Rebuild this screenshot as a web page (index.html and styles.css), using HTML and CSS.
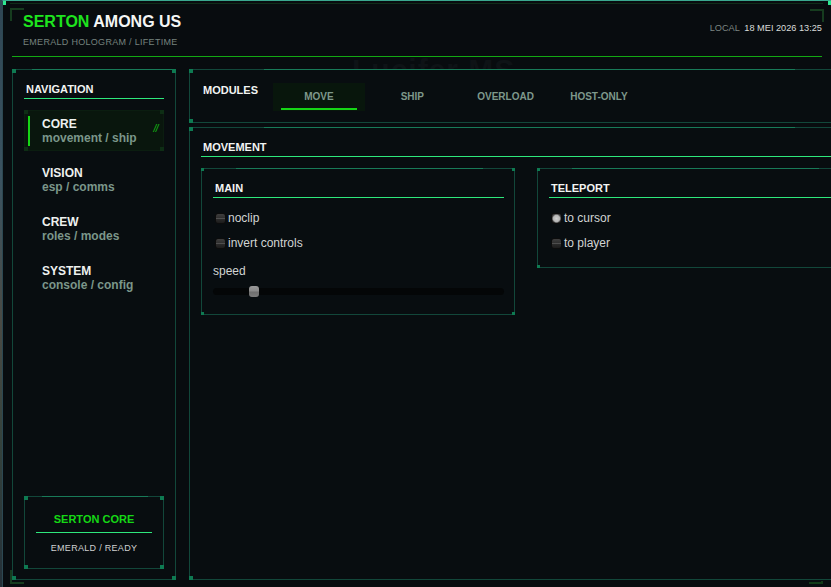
FILE: index.html
```html
<!DOCTYPE html>
<html lang="nl">
<head>
<meta charset="utf-8">
<title>Serton Among Us</title>
<link rel="stylesheet" href="styles.css">
</head>
<body>
<div class="window">
  <div class="bg-text">Lucifer MS</div>
  <span class="frame-corner fc-tl"></span>
  <span class="frame-corner fc-tr"></span>
  <span class="frame-corner fc-bl"></span>
  <span class="frame-corner fc-br"></span>
  <span class="win-dot dot-l"></span>
  <span class="win-dot dot-r"></span>

  <header class="header">
    <div class="head-row">
      <div class="brand">
        <div class="title"><span class="accent">SERTON</span> AMONG US</div>
        <div class="subtitle">EMERALD HOLOGRAM / LIFETIME</div>
      </div>
      <div class="clock"><span class="clock-label">LOCAL</span><span class="clock-time">18 MEI 2026 13:25</span></div>
    </div>
  </header>

  <div class="content">
    <aside class="panel sidebar">
      <div class="sec-title">NAVIGATION</div>
      <nav class="nav">
        <a class="nav-item active">
          <span class="nav-bar"></span>
          <span class="nav-text"><span class="nav-name">CORE</span><span class="nav-sub">movement / ship</span></span>
          <span class="nav-mark">//</span>
        </a>
        <a class="nav-item">
          <span class="nav-text"><span class="nav-name">VISION</span><span class="nav-sub">esp / comms</span></span>
        </a>
        <a class="nav-item">
          <span class="nav-text"><span class="nav-name">CREW</span><span class="nav-sub">roles / modes</span></span>
        </a>
        <a class="nav-item">
          <span class="nav-text"><span class="nav-name">SYSTEM</span><span class="nav-sub">console / config</span></span>
        </a>
      </nav>
      <div class="panel core-box">
        <div class="core-title">SERTON CORE</div>
        <div class="core-line"></div>
        <div class="core-status">EMERALD / READY</div>
      </div>
    </aside>

    <main class="main">
      <section class="panel modules">
        <div class="modules-label">MODULES</div>
        <div class="tabs">
          <div class="tab active">MOVE</div>
          <div class="tab">SHIP</div>
          <div class="tab">OVERLOAD</div>
          <div class="tab">HOST-ONLY</div>
        </div>
      </section>

      <section class="panel movement">
        <div class="sec-title">MOVEMENT</div>
        <div class="cards">
          <div class="panel card">
            <div class="sec-title card-title">MAIN</div>
            <div class="rows">
              <label class="row"><span class="check"></span><span>noclip</span></label>
              <label class="row"><span class="check"></span><span>invert controls</span></label>
            </div>
            <div class="field-label">speed</div>
            <div class="slider">
              <div class="slider-track"></div>
              <div class="slider-thumb" style="left: 12.4%"></div>
            </div>
          </div>
          <div class="panel card">
            <div class="sec-title card-title">TELEPORT</div>
            <div class="rows">
              <label class="row"><span class="check on"></span><span>to cursor</span></label>
              <label class="row"><span class="check"></span><span>to player</span></label>
            </div>
          </div>
        </div>
      </section>
    </main>
  </div>
</div>
</body>
</html>
```

FILE: styles.css
```css
* { box-sizing: border-box; }

html, body {
  margin: 0;
  padding: 0;
  width: 831px;
  height: 587px;
  overflow: hidden;
}

body {
  background: linear-gradient(180deg, #2f4654 0%, #3b5361 30%, #4a4a44 55%, #35423c 75%, #243038 100%);
  font-family: "Liberation Sans", Arial, sans-serif;
  color: #eef1ef;
}

.window {
  position: relative;
  margin-left: 2px;
  width: 829px;
  height: 587px;
  background: #080c0f;
  border-top: 1px solid #3aa88e;
  border-left: 1px solid #2c4852;
  overflow: hidden;
}

.bg-text {
  position: absolute;
  left: 349px;
  top: 52px;
  font-size: 30px;
  font-weight: bold;
  color: #0e1316;
  letter-spacing: 1px;
}

.win-dot {
  position: absolute;
  top: 0;
  width: 4px;
  height: 4px;
  background: #2ee890;
}
.dot-l { left: -1px; }
.dot-r { right: 0; width: 3px; }

.frame-corner {
  position: absolute;
  width: 14px;
  height: 13px;
  border-color: #163c1f;
  border-style: solid;
  border-width: 0;
}
.fc-tl { left: 7px; top: 7px; border-top-width: 2px; border-left-width: 2px; }
.fc-tr { right: 7px; top: 8px; border-top-width: 2px; border-right-width: 2px; }
.fc-bl { left: 7px; bottom: 3px; border-bottom-width: 2px; border-left-width: 2px; height: 14px; }
.fc-br { right: 8px; bottom: 3px; border-bottom-width: 2px; border-right-width: 2px; height: 3px; border-color: #123a18; }

/* header */
.header {
  position: relative;
  margin: 2px 8px 0 7px;
  padding: 0 1px 0 2px;
  border-top: 1px solid #0f2c18;
}

.head-row {
  display: flex;
  justify-content: space-between;
  align-items: flex-start;
  padding: 9px 0 8px 11px;
  border-bottom: 1px solid #13a813;
}

.title {
  font-size: 16px;
  line-height: 18px;
  font-weight: bold;
  color: #f4f6f5;
}
.accent { color: #1ee41e; }

.subtitle {
  margin-top: 6px;
  font-size: 9px;
  line-height: 11px;
  letter-spacing: 0.3px;
  color: #76827e;
}

.clock {
  padding-top: 10px;
  font-size: 9.2px;
  line-height: 11px;
  white-space: nowrap;
}
.clock-label { color: #7c8682; margin-right: 4.5px; }
.clock-time { color: #d9dcda; }

/* layout */
.content {
  display: flex;
  gap: 13px;
  margin: 12px 0 0 9px;
}

.panel {
  position: relative;
  border: 1px solid #12473a;
  background: #080d10;
}
.panel::before {
  content: "";
  position: absolute;
  top: -1px;
  left: 11%;
  right: 10%;
  height: 1px;
  background: #187a58;
}
.panel::after {
  content: "";
  position: absolute;
  inset: -1px;
  pointer-events: none;
  background:
    linear-gradient(#0e7a52, #0e7a52) left top / 4px 4px no-repeat,
    linear-gradient(#0e7a52, #0e7a52) right top / 4px 4px no-repeat,
    linear-gradient(#0e7a52, #0e7a52) left bottom / 4px 4px no-repeat,
    linear-gradient(#0e7a52, #0e7a52) right bottom / 4px 4px no-repeat;
}

.sec-title {
  font-size: 11px;
  line-height: 14px;
  font-weight: bold;
  color: #f2f4f3;
  padding: 0 0 2px 2px;
  border-bottom: 1px solid #2ee87c;
}

/* sidebar */
.sidebar {
  flex: none;
  width: 164px;
  height: 511px;
  padding: 12px 11px 10px 11px;
  display: flex;
  flex-direction: column;
}
.sidebar::before { left: 12%; right: 1%; }

.nav {
  display: flex;
  flex-direction: column;
  gap: 8px;
  margin-top: 11px;
}

.nav-item {
  position: relative;
  display: flex;
  align-items: center;
  height: 41px;
  padding: 6px 5px 5px 17px;
  border: 1px solid transparent;
  text-decoration: none;
}
.nav-item.active {
  background: #09160d;
  border-color: #0b1d10;
}
.nav-item.active::after {
  content: "";
  position: absolute;
  inset: -1px;
  pointer-events: none;
  background:
    linear-gradient(#0e2e15, #0e2e15) left top / 4px 4px no-repeat,
    linear-gradient(#0e2e15, #0e2e15) right top / 4px 4px no-repeat,
    linear-gradient(#0e2e15, #0e2e15) left bottom / 4px 4px no-repeat,
    linear-gradient(#0e2e15, #0e2e15) right bottom / 4px 4px no-repeat;
}

.nav-bar {
  position: absolute;
  left: 3px;
  top: 5px;
  width: 2px;
  height: 30px;
  background: #16d616;
}

.nav-text {
  flex: 1;
  display: flex;
  flex-direction: column;
  align-self: flex-start;
}
.nav-name {
  font-size: 12px;
  line-height: 14px;
  font-weight: bold;
  color: #eef1ef;
}
.nav-sub {
  font-size: 12px;
  line-height: 14px;
  font-weight: bold;
  color: #7b968a;
}
.nav-mark {
  font-size: 10px;
  font-style: italic;
  color: #14c014;
  margin-bottom: 5px;
  letter-spacing: -0.5px;
}

.core-box {
  margin-top: auto;
  height: 73px;
  padding: 16px 11px 0;
  text-align: center;
}
.core-box::before { left: 12%; right: 11%; }
.core-title {
  font-size: 11px;
  line-height: 13px;
  font-weight: bold;
  color: #15d815;
}
.core-line {
  height: 1px;
  margin-top: 6px;
  background: #2ee87c;
}
.core-status {
  margin-top: 10px;
  font-size: 9px;
  line-height: 11px;
  letter-spacing: 0.3px;
  color: #cfd1d0;
}

/* main column */
.main {
  flex: none;
  width: 674px;
  display: flex;
  flex-direction: column;
  gap: 4px;
}

.modules {
  height: 54px;
  display: flex;
  align-items: flex-start;
  padding: 13px 0 0 13px;
}
.modules-label {
  width: 70px;
  font-size: 11px;
  line-height: 14px;
  font-weight: bold;
  color: #f2f4f3;
}
.tabs {
  display: flex;
  gap: 1.3px;
}
.tab {
  position: relative;
  width: 92px;
  height: 28px;
  line-height: 28px;
  text-align: center;
  font-size: 10px;
  font-weight: bold;
  color: #7e988b;
}
.tab.active { background: #08160c; }
.tab.active::after {
  content: "";
  position: absolute;
  left: 8px;
  right: 8px;
  bottom: 1px;
  height: 2px;
  background: #16d616;
}

.movement {
  height: 453px;
  padding: 12px 12px 0 11px;
}

.cards {
  display: flex;
  align-items: flex-start;
  gap: 22px;
  margin-top: 11px;
}

.card {
  flex: none;
  width: 314px;
  padding: 12px 10px 17px 11px;
}
.card::after {
  background:
    linear-gradient(#0e7a52, #0e7a52) left top / 3px 3px no-repeat,
    linear-gradient(#0e7a52, #0e7a52) right top / 3px 3px no-repeat,
    linear-gradient(#0e7a52, #0e7a52) left bottom / 3px 3px no-repeat,
    linear-gradient(#0e7a52, #0e7a52) right bottom / 3px 3px no-repeat;
}
.card-title { padding-left: 2px; }

.rows {
  display: flex;
  flex-direction: column;
  gap: 11px;
  margin-top: 13px;
}

.row {
  display: flex;
  align-items: center;
  gap: 2px;
  height: 14px;
  padding-left: 2px;
  font-size: 12px;
  line-height: 14px;
  color: #d2d4d3;
}

.check {
  flex: none;
  width: 11px;
  height: 11px;
  border-radius: 3px;
  border: 1px solid #0c0c0c;
  background: linear-gradient(180deg, #3e3e3e 0%, #303030 40%, #5a5a5a 48%, #2a2a2a 56%, #1c1c1c 100%);
}
.check.on {
  background:
    radial-gradient(circle at 50% 50%, #d0d0d0 0, #b4b4b4 3.2px, #6a6a6a 4px, rgba(0,0,0,0) 4.6px),
    linear-gradient(180deg, #3e3e3e 0%, #303030 40%, #5a5a5a 48%, #2a2a2a 56%, #1c1c1c 100%);
}

.field-label {
  margin-top: 14px;
  font-size: 12px;
  line-height: 14px;
  color: #d2d4d3;
}

.slider {
  position: relative;
  height: 11px;
  margin-top: 8px;
}
.slider-track {
  position: absolute;
  left: 0;
  right: 0;
  top: 2px;
  height: 7px;
  border-radius: 4px;
  background: #040607;
}
.slider-thumb {
  position: absolute;
  top: 0;
  width: 10px;
  height: 11px;
  border-radius: 3px;
  background: linear-gradient(180deg, #9a9a9a 0%, #8a8a8a 45%, #6e6e6e 55%, #7c7c7c 100%);
}
```
